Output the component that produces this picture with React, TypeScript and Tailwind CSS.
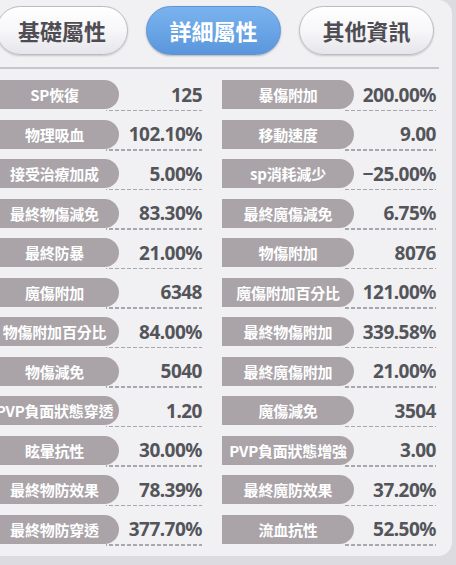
import React from "react";

const rows: [string, string, string, string][] = [
  ["SP恢復", "125", "暴傷附加", "200.00%"],
  ["物理吸血", "102.10%", "移動速度", "9.00"],
  ["接受治療加成", "5.00%", "sp消耗減少", "−25.00%"],
  ["最終物傷減免", "83.30%", "最終魔傷減免", "6.75%"],
  ["最終防暴", "21.00%", "物傷附加", "8076"],
  ["魔傷附加", "6348", "魔傷附加百分比", "121.00%"],
  ["物傷附加百分比", "84.00%", "最終物傷附加", "339.58%"],
  ["物傷減免", "5040", "最終魔傷附加", "21.00%"],
  ["PVP負面狀態穿透", "1.20", "魔傷減免", "3504"],
  ["眩暈抗性", "30.00%", "PVP負面狀態增強", "3.00"],
  ["最終物防效果", "78.39%", "最終魔防效果", "37.20%"],
  ["最終物防穿透", "377.70%", "流血抗性", "52.50%"],
];

const cjk = "font-['Noto_Sans_CJK_TC','Noto_Sans',sans-serif]";

function Tab({ label, active, cls }: { label: string; active?: boolean; cls: string }) {
  return (
    <div
      className={
        "relative flex h-[49px] items-center justify-center rounded-full text-[22px] font-bold " +
        cjk +
        " " +
        cls +
        " " +
        (active
          ? "border-[1.5px] border-[#5c93d6] bg-[linear-gradient(180deg,#7ab3ee_0%,#6aa5e6_50%,#5b96dc_100%)] text-white shadow-[0_1px_2px_rgba(0,0,0,0.25)]"
          : "border-[1.5px] border-[#bdb9c1] bg-[linear-gradient(180deg,#ffffff_0%,#f7f6f8_50%,#e6e5ea_100%)] text-[#4e4d53] shadow-[0_1px_2px_rgba(0,0,0,0.18),inset_0_1px_0_#ffffff]")
      }
    >
      <span className="relative -mt-[1px]">{label}</span>
    </div>
  );
}

function Cell({
  label,
  value,
  pillW,
  pillMl,
  valW,
  valMl,
}: {
  label: string;
  value: string;
  pillW: string;
  pillMl: string;
  valW: string;
  valMl: string;
}) {
  return (
    <div className="flex h-[31px] items-start">
      <div
        className={
          "relative z-10 flex h-[29px] shrink-0 items-center justify-center rounded-r-full bg-[#aaa4a9] text-[15px] font-bold leading-none text-white " +
          cjk +
          " " +
          pillW +
          " " +
          pillMl
        }
      >
        <span className="whitespace-nowrap tracking-[-0.2px]">{label}</span>
      </div>
      <div
        className={
          "flex h-[31px] shrink-0 items-center justify-end bg-[linear-gradient(to_right,#a9a7ae_4px,transparent_4px)] bg-[length:6px_1.5px] bg-bottom bg-repeat-x pb-[1px] text-[19px] font-bold leading-none tracking-[-0.5px] text-[#53555b] font-['Noto_Sans','Open_Sans',sans-serif] " +
          valW +
          " " +
          valMl
        }
      >
        {value}
      </div>
    </div>
  );
}

export default function App() {
  return (
    <div className="h-[565px] w-[456px] overflow-hidden bg-[#dcdbdf]">
      <div className="flex h-[556px] w-[452px] flex-col overflow-hidden rounded-r-[14px] bg-[#f1f0f2] pt-[6px]">
        <div className="flex items-center gap-[18px]">
          <Tab label="基礎屬性" cls="ml-[-4px] w-[132px]" />
          <Tab label="詳細屬性" active cls="w-[135px]" />
          <Tab label="其他資訊" cls="w-[135px]" />
        </div>
        <div className="mt-[12px] h-[2px] w-[439px] bg-[#c8c5cc]" />
        <div className="mt-[11px] flex flex-col gap-y-[8.5px]">
          {rows.map(([l1, v1, l2, v2]) => (
            <div key={l1} className="flex">
              <Cell label={l1} value={v1} pillW="w-[129px]" pillMl="ml-[-10px]" valW="w-[96px]" valMl="ml-[-13px]" />
              <div className="w-[20px] shrink-0" />
              <Cell label={l2} value={v2} pillW="w-[132px]" pillMl="ml-0" valW="w-[92px]" valMl="ml-[-10px]" />
            </div>
          ))}
        </div>
      </div>
    </div>
  );
}
